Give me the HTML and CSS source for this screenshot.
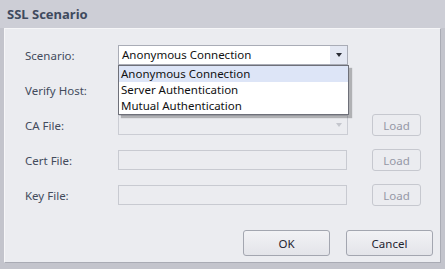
FILE: index.html
```html
<!DOCTYPE html>
<html lang="en">
  <head>
    <meta charset="UTF-8" />
    <title>SSL Scenario</title>
    <link rel="stylesheet" href="styles.css">
  </head>
  <body>
    <div class="dialog">
      <div class="title">SSL Scenario</div>
      <div class="panel">
        <div class="form">
          <label>Scenario:</label>
          <div class="combo-wrap">
            <div class="combo">
              <span class="value">Anonymous Connection</span>
              <span class="arrow"></span>
            </div>
            <ul class="list">
              <li class="selected">Anonymous Connection</li>
              <li>Server Authentication</li>
              <li>Mutual Authentication</li>
            </ul>
          </div>
          <span></span>

          <label>Verify Host:</label>
          <div class="combo">
            <span class="value"></span>
            <span class="arrow"></span>
          </div>
          <span></span>

          <label>CA File:</label>
          <div class="combo disabled">
            <span class="value"></span>
            <span class="arrow"></span>
          </div>
          <button class="load" disabled>Load</button>

          <label>Cert File:</label>
          <div class="field"></div>
          <button class="load" disabled>Load</button>

          <label>Key File:</label>
          <div class="field"></div>
          <button class="load" disabled>Load</button>
        </div>
        <div class="actions">
          <button class="btn">OK</button>
          <button class="btn">Cancel</button>
        </div>
      </div>
    </div>
  </body>
</html>
```

FILE: styles.css
```css
body {
  margin: 0;
  background-color: #c3c4cc;
  font-family: "Noto Sans", "Open Sans", sans-serif;
  font-size: 11.5px;
}

.dialog {
  width: 445px;
  height: 269px;
  display: flex;
  flex-direction: column;
}

.title {
  height: 28px;
  line-height: 28px;
  padding-left: 7px;
  font-weight: bold;
  font-size: 13px;
  color: #3f4a5e;
  background-color: #cdced6;
}

.panel {
  margin: 0 4px 6px 4px;
  flex: 1;
  background-color: #ebecf0;
  border-top: 1px solid #f6f6f8;
  border-left: 1px solid #f6f6f8;
  border-right: 1px solid #a9abb4;
  border-bottom: 1px solid #a9abb4;
  display: flex;
  flex-direction: column;
  justify-content: space-between;
  padding: 15px 7px 6px 20px;
}

.form {
  display: grid;
  grid-template-columns: 93px 230px 24px 49px;
  grid-auto-rows: 22px;
  row-gap: 13px;
  align-items: center;
}

.form label {
  color: #434b5c;
}

.form .load,
.form > span {
  grid-column: 4;
}

.combo-wrap {
  position: relative;
}

.combo {
  height: 20px;
  box-sizing: border-box;
  border: 1px solid #a9acb6;
  background-color: #fff;
  display: flex;
  align-items: stretch;
}

.combo .value {
  flex: 1;
  padding-left: 3px;
  line-height: 18px;
  color: #111;
}

.combo .arrow {
  width: 17px;
  background-color: #e4e8f3;
  display: flex;
  align-items: center;
  justify-content: center;
}

.combo .arrow::after {
  content: "";
  border-left: 3px solid transparent;
  border-right: 3px solid transparent;
  border-top: 4px solid #2a2d35;
}

.combo.disabled {
  background-color: #ebecf0;
  border-color: #cbcdd4;
}

.combo.disabled .arrow {
  background-color: transparent;
}

.combo.disabled .arrow::after {
  border-top-color: #c4c6cd;
}

.list {
  position: absolute;
  left: 0;
  top: 20px;
  width: 231px;
  margin: 0;
  padding: 0;
  list-style: none;
  background-color: #fff;
  border: 1px solid #6e7079;
  box-sizing: border-box;
  box-shadow: 3px 3px 1px rgba(0, 0, 0, 0.25);
  z-index: 2;
}

.list li {
  height: 16px;
  line-height: 16px;
  padding-left: 2px;
  color: #111;
}

.list li.selected {
  background-color: #dde5f7;
}

.field {
  height: 20px;
  box-sizing: border-box;
  border: 1px solid #c8cad1;
  background-color: #ebecf0;
  width: 229px;
}

.load {
  height: 22px;
  width: 49px;
  font-family: inherit;
  font-size: 11.5px;
  color: #9598a6;
  background-color: #ebecf0;
  border: 1px solid #c6c8cf;
  border-radius: 3px;
  padding: 0;
}

.actions {
  display: flex;
  justify-content: flex-end;
  gap: 16px;
}

.btn {
  width: 87px;
  height: 26px;
  font-family: inherit;
  font-size: 11.5px;
  color: #1f2430;
  background: linear-gradient(#f2f2f5, #e3e4e9);
  border: 1px solid #a3a6b0;
  border-radius: 3px;
  padding: 0;
}
```
